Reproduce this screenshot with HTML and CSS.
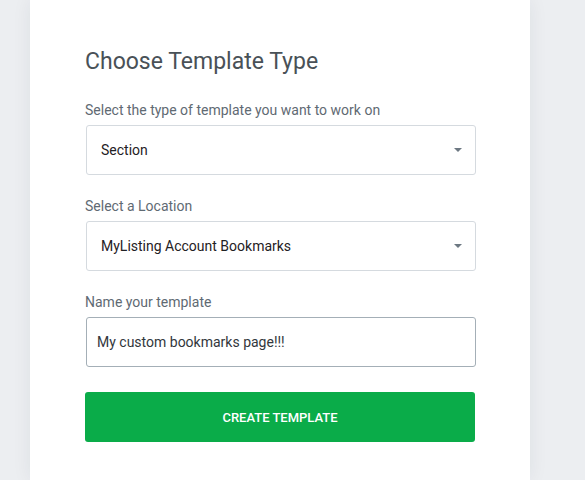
FILE: index.html
```html
<!DOCTYPE html>
<html lang="en">
<head>
	<meta charset="UTF-8">
	<title>Choose Template Type</title>
	<link rel="stylesheet" href="styles.css">
</head>
<body>
	<div class="card">
		<h2 class="title">Choose Template Type</h2>
		<form class="form">
			<div class="group">
				<label class="label" for="tpl_type">Select the type of template you want to work on</label>
				<div class="select-wrap">
					<select id="tpl_type" class="field">
						<option>Section</option>
					</select>
				</div>
			</div>
			<div class="group">
				<label class="label" for="tpl_location">Select a Location</label>
				<div class="select-wrap">
					<select id="tpl_location" class="field">
						<option>MyListing Account Bookmarks</option>
					</select>
				</div>
			</div>
			<div class="group">
				<label class="label" for="tpl_name">Name your template</label>
				<input id="tpl_name" class="field input" type="text" value="My custom bookmarks page!!!">
			</div>
			<button class="btn" type="button">Create Template</button>
		</form>
	</div>
</body>
</html>
```

FILE: styles.css
```css
*{
	margin: 0;
	padding: 0;
	box-sizing: border-box;
}
html, body{
	height: 100%;
}
body{
	background: #eceef1;
	font-family: Roboto, "Liberation Sans", sans-serif;
	overflow: hidden;
}
.card{
	width: 500px;
	height: 100%;
	margin-left: 30px;
	background: #fff;
	padding: 47px 55px 0;
	box-shadow: 0 0 18px rgba(30, 40, 60, .07);
}
.title{
	font-size: 23px;
	font-weight: 400;
	line-height: 30px;
	color: #495157;
}
.form{
	margin-top: 23px;
	width: 391px;
}
.group{
	margin-bottom: 21px;
}
.group:last-of-type{
	margin-bottom: 25px;
}
.label{
	display: block;
	font-size: 14px;
	line-height: 20px;
	color: #5f6a73;
	margin-bottom: 5px;
}
.select-wrap{
	position: relative;
	margin-left: 1px;
}
.select-wrap::after{
	content: '';
	position: absolute;
	right: 14px;
	top: 23px;
	border-left: 4px solid transparent;
	border-right: 4px solid transparent;
	border-top: 4px solid #6d7882;
	pointer-events: none;
}
.field{
	display: block;
	width: 390px;
	height: 50px;
	border: 1px solid #d5dadf;
	border-radius: 3px;
	background: #fff;
	font-family: inherit;
	font-size: 14px;
	color: #1f2124;
	padding: 0 14px;
	outline: none;
	-webkit-appearance: none;
	appearance: none;
}
.input{
	margin-left: 1px;
	border-color: #a4afb7;
	padding: 0 10px;
	color: #32373c;
}
.btn{
	display: block;
	width: 390px;
	height: 50px;
	border: 0;
	border-radius: 3px;
	background: #0aac49;
	color: #fff;
	font-family: inherit;
	font-size: 13px;
	font-weight: 500;
	text-transform: uppercase;
}
```
